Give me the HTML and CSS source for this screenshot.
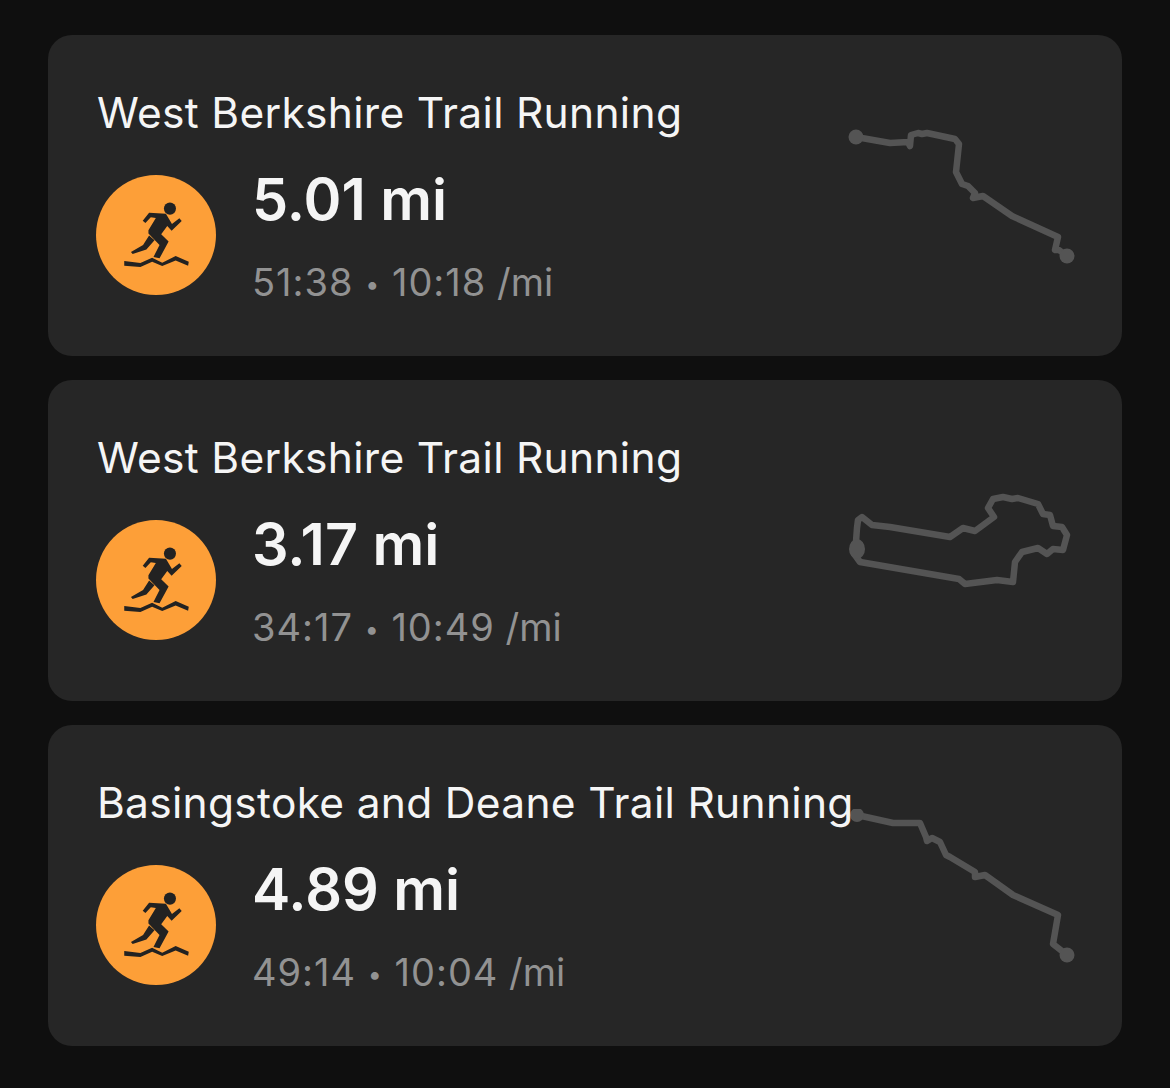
FILE: index.html
```html
<!DOCTYPE html>
<html lang="en">
  <head>
    <meta charset="UTF-8" />
    <meta name="viewport" content="width=device-width, initial-scale=1.0" />
    <title>Workouts</title>
    <link rel="stylesheet" href="styles.css">
  </head>
  <body>
    <svg class="defs" width="0" height="0">
      <defs>
        <g id="runner">
          <circle cx="238" cy="114" r="18" />
          <path d="M157 150 L176 126 L226 129 L244 160 L266 143 L273 151 L243 180 L230 166 L212 190 L234 212 L207 262 L189 258 L207 222 L174 188 L174 178 L196 142 L181 140 L165 157 Z" />
          <path d="M176 194 L192 208 L168 236 L127 249 L122 243 L158 222 Z" />
          <path d="M102 270 L150 276 L185 260 L215 275 L255 255 L294 272 L292 284 L255 268 L215 285 L185 272 L150 288 L102 284 Z" />
        </g>
      </defs>
    </svg>

    <div class="card">
      <svg class="route" viewBox="0 0 240 170" width="240" height="170">
        <polyline points="16,18 50,24 68,23 70,27 71,16 78,14 82,15 87,14 115,20 119,25 116,53 122,65 128,67 135,74 133,79 143,77 172,97 218,118 215,131 219,131 227,137" />
        <circle cx="16" cy="18" r="7.5" />
        <circle cx="227" cy="137" r="7.5" />
      </svg>
      <div class="card-title">West Berkshire Trail Running</div>
      <div class="card-body">
        <div class="badge">
          <svg viewBox="18 14 357 357"><use href="#runner" /></svg>
        </div>
        <div class="stats">
          <div class="distance">5.01 mi</div>
          <div class="pace">51:38 <span class="dot">•</span> 10:18 <span class="unit">/mi</span></div>
        </div>
      </div>
    </div>

    <div class="card">
      <svg class="route" viewBox="0 0 240 170" width="240" height="170">
        <polyline points="17,64 18,56 22,53 32,61 50,63 110,73 123,64 135,67 154,53 148,44 153,35 163,33 172,35 178,34 198,40 203,50 210,51 213,62 222,63 227,71 223,86 213,85 207,90 198,84 182,88 175,98 173,118 157,116 125,120 119,115 20,98 15,91 17,64" />
        <ellipse cx="17" cy="85" rx="8" ry="10" />
      </svg>
      <div class="card-title">West Berkshire Trail Running</div>
      <div class="card-body">
        <div class="badge">
          <svg viewBox="18 14 357 357"><use href="#runner" /></svg>
        </div>
        <div class="stats">
          <div class="distance">3.17 mi</div>
          <div class="pace">34:17 <span class="dot">•</span> 10:49 <span class="unit">/mi</span></div>
        </div>
      </div>
    </div>

    <div class="card">
      <svg class="route" viewBox="0 0 240 170" width="240" height="170">
        <polyline points="17,6 53,14 80,14 86,28 87,32 92,29 100,33 106,46 110,48 135,63 135,68 145,66 173,86 218,106 213,135 227,146" />
        <circle cx="17" cy="6" r="7" />
        <circle cx="227" cy="146" r="7.5" />
      </svg>
      <div class="card-title">Basingstoke and Deane Trail Running</div>
      <div class="card-body">
        <div class="badge">
          <svg viewBox="18 14 357 357"><use href="#runner" /></svg>
        </div>
        <div class="stats">
          <div class="distance">4.89 mi</div>
          <div class="pace">49:14 <span class="dot">•</span> 10:04 <span class="unit">/mi</span></div>
        </div>
      </div>
    </div>
  </body>
</html>
```

FILE: styles.css
```css
html {
  background-color: #0f0f0f;
}

body {
  margin: 0;
  padding: 35.4px 48px 42px;
  display: flex;
  flex-direction: column;
  gap: 24.4px;
  font-family: Inter, "Liberation Sans", sans-serif;
  background-color: #0f0f0f;
}

.defs {
  position: absolute;
}

.card {
  position: relative;
  height: 320.6px;
  box-sizing: border-box;
  padding: 50.2px 48px 0;
  border-radius: 24px;
  background-color: #262626;
}

.route {
  position: absolute;
  left: 792px;
  top: 84px;
}

.route polyline {
  fill: none;
  stroke: #545454;
  stroke-width: 6.5;
  stroke-linejoin: round;
  stroke-linecap: round;
}

.route circle,
.route ellipse {
  fill: #545454;
}

.card-title {
  position: relative;
  margin-left: 1px;
  font-size: 42.5px;
  line-height: 54px;
  letter-spacing: 0.3px;
  color: #f5f5f5;
}

.card-body {
  display: flex;
  align-items: flex-start;
  gap: 36px;
  margin-top: 35px;
}

.badge {
  flex: none;
  width: 120px;
  height: 120px;
  border-radius: 50%;
  background-color: #fd9f38;
}

.badge svg {
  display: block;
  width: 100%;
  height: 100%;
  fill: #222;
}

.stats {
  margin-top: -10px;
}

.distance {
  font-size: 57.5px;
  line-height: 68px;
  font-weight: 600;
  color: #f5f5f5;
}

.pace {
  margin-top: 27px;
  font-size: 38px;
  line-height: 44px;
  letter-spacing: 1px;
  color: #929292;
}

.dot {
  font-size: 25px;
  vertical-align: 3px;
}

.unit {
  letter-spacing: 0;
  margin-left: -1px;
}
```
